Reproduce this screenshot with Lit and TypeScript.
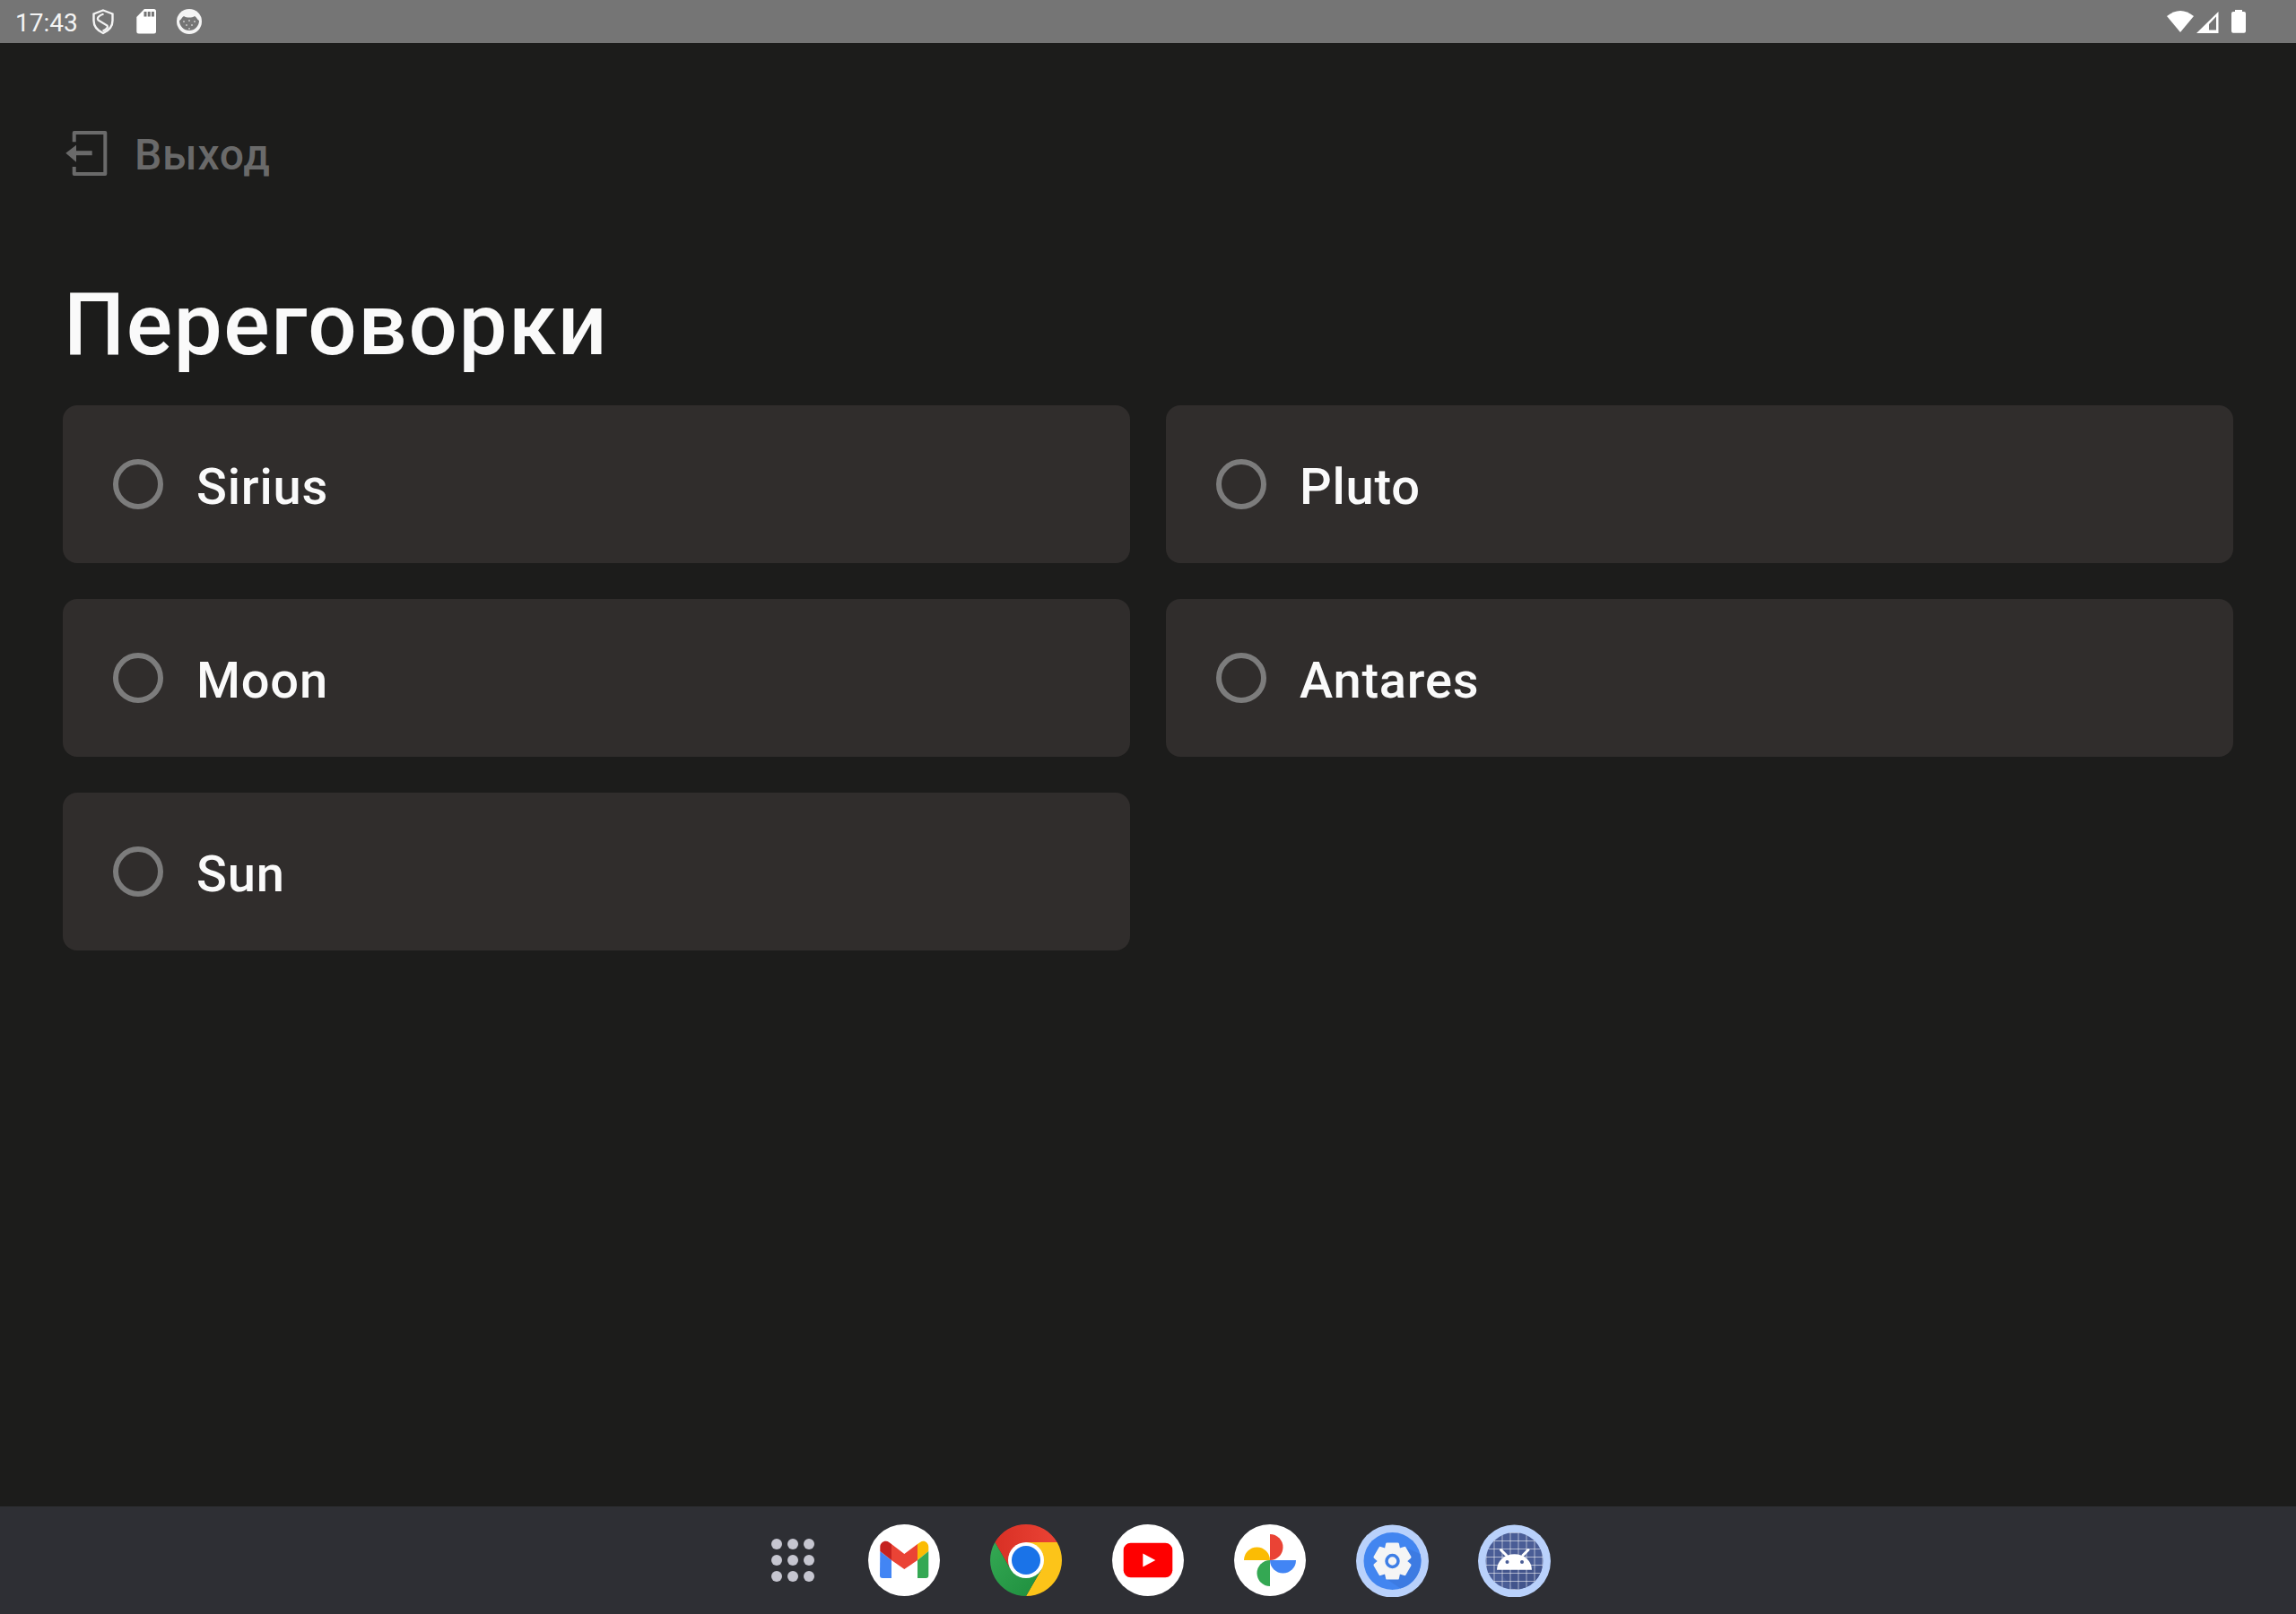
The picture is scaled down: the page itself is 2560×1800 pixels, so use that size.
import {html, css, svg, LitElement} from 'lit';
import {customElement} from 'lit/decorators.js';

const rooms = ['Sirius', 'Pluto', 'Moon', 'Antares', 'Sun'];

// six toothed gear outline around 0,0
function gearPath(outer: number, inner: number) {
  const pts: string[] = [];
  for (let i = 0; i < 6; i++) {
    const a = (i * 60 - 90) * Math.PI / 180;
    for (const [off, r] of [[-0.3, outer], [0.3, outer], [0.5, inner], [0.55, inner]] as number[][]) {
      const t = a + off;
      pts.push(`${(Math.cos(t) * r).toFixed(2)} ${(Math.sin(t) * r).toFixed(2)}`);
    }
  }
  return 'M' + pts.join('L') + 'Z';
}

const gridLines = [-31.5, -22.5, -13.5, -4.5, 4.5, 13.5, 22.5, 31.5];

@customElement('app-root')
export class AppRoot extends LitElement {
  static styles = css`
    :host {
      display: flex;
      flex-direction: column;
      height: 1800px;
      background: #1c1c1b;
      font-family: Roboto, sans-serif;
      color: #fff;
    }
    svg { display: block; }
    .status {
      height: 48px;
      background: #757575;
      display: flex;
      align-items: center;
      padding: 0 56px 0 17px;
      font-size: 28px;
      color: #f4f4f4;
    }
    .status .time { margin-right: 17px; width: 69px; position: relative; top: 1px; }
    .status .right { margin-left: auto; }
    main { flex: 1; display: flex; flex-direction: column; padding: 0 70px; }
    .exit {
      display: flex;
      align-items: center;
      gap: 30px;
      margin-top: 89px;
      padding-left: 3px;
      color: #6a6a6a;
      font-size: 48px;
      font-weight: 500;
      letter-spacing: 0.8px;
      line-height: 68px;
    }
    .exit span { position: relative; top: 2px; }
    h1 {
      margin: 101px 0 0 1px;
      font-size: 96px;
      font-weight: 500;
      letter-spacing: 1.6px;
      line-height: 112px;
      height: 146px;
      color: #fafafa;
    }
    .rooms { display: grid; grid-template-columns: 1fr 1fr; gap: 40px; }
    .room {
      height: 176px;
      border-radius: 16px;
      background: #302d2c;
      display: flex;
      align-items: center;
      padding-left: 56px;
      font-size: 56px;
      font-weight: 500;
      letter-spacing: 0.8px;
      color: #fafafa;
    }
    .radio {
      width: 56px;
      height: 56px;
      box-sizing: border-box;
      border: 6px solid #7c7c7c;
      border-radius: 50%;
      margin: 0 37px 0 0;
    }
    .room span { position: relative; top: 3px; }
    .dock {
      height: 120px;
      background: #2e2f34;
      display: flex;
      align-items: center;
      justify-content: center;
      padding-left: 24px;
    }
    .cell { width: 136px; display: flex; justify-content: center; }
    .cell.launcher { width: 112px; }
    .disc { width: 80px; height: 80px; border-radius: 50%; background: #fff; }
  `;

  renderStatus() {
    return html`<div class="status">
      <div class="time">17:43</div>
      <svg width="122" height="48" viewBox="103 0 122 48">
        <g fill="none" stroke="#f4f4f4" stroke-width="2.400">
          <path d="M115 11.500 125.500 15.500V23c0 6.500-4 11-10.500 14C108.500 34 104.500 29.500 104.500 23V15.500Z"/>
          <path d="M115.500 15.500C111 17 107.500 19.500 109.500 22.500L119.500 28.500C121 31 118 33 114.500 34.500" stroke-width="2.200"/>
        </g>
        <path fill="#fff" d="M161 10H171.500a2.500 2.500 0 0 1 2.500 2.500V35a2.500 2.500 0 0 1-2.500 2.500H154.800a2.500 2.500 0 0 1-2.500-2.500V19Z"/>
        <path fill="#757575" d="M160.500 13h3v5.500h-3ZM164.700 13h3v5.500h-3ZM168.900 13h3v5.500h-3Z"/>
        <circle cx="211" cy="24" r="14" fill="#f4f4f4"/>
        <path fill="#757575" d="M200 23c2-1 3-4 5-5 3 2 9 2 12 0 2 1 3 4 5 5a11 11 0 0 1-22 0Z"/>
        <g fill="#fff" opacity=".6">
          <circle cx="205" cy="24" r="1"/><circle cx="211" cy="23" r="1"/><circle cx="217" cy="24" r="1"/>
          <circle cx="208" cy="28" r="1"/><circle cx="214" cy="28" r="1"/><circle cx="211" cy="32" r="1"/>
        </g>
      </svg>
      <svg class="right" width="88" height="48" viewBox="2416 0 88 48" fill="#fff">
        <path d="M2416 18Q2431 6 2446 18L2431 36Z"/>
        <path fill-rule="evenodd" d="M2449 37 2473.500 13V37ZM2463 33.500H2471V18.500L2463 27Z"/>
        <path d="M2490 13H2492V11H2500V13H2502a2 2 0 0 1 2 2V34.700a2 2 0 0 1-2 2H2490a2 2 0 0 1-2-2V15a2 2 0 0 1 2-2Z"/>
      </svg>
    </div>`;
  }

  renderExit() {
    return html`<div class="exit">
      <svg width="47" height="50" viewBox="73 146 47 50" fill="none" stroke="#6a6a6a" stroke-width="4">
        <path stroke-linejoin="round" d="M82.700 158.300V148H117.300V194H82.700V186"/>
        <path d="M83 170.700H102.700" stroke-width="5"/>
        <path fill="#6a6a6a" stroke="none" d="M73.300 170.700 85 161.700V180.700Z"/>
      </svg>
      <span>Выход</span>
    </div>`;
  }

  gmail() {
    return html`<svg class="disc" viewBox="0 0 80 80">
      <path fill="#4285f4" d="M13.300 30 26 40V60H16a3 3 0 0 1-3-3Z"/>
      <path fill="#c5221f" d="M13.300 30V25c0-5 6-8 10-5L26 22V40Z"/>
      <path fill="#ea4335" d="M26 22 40.300 33 55 22V40L40.300 50 26 40Z"/>
      <path fill="#fbbc04" d="M55 22 58 20c4-3 9 0 9.300 5v5L55 40Z"/>
      <path fill="#34a853" d="M67.300 30V57a3 3 0 0 1-3 3H55V40Z"/>
    </svg>`;
  }

  chrome() {
    return html`<svg width="80" height="80" viewBox="-40 -40 80 80">
      <defs>
        <linearGradient id="cr" x1="0" x2="1"><stop offset="0" stop-color="#d93025"/><stop offset="1" stop-color="#ea4335"/></linearGradient>
        <linearGradient id="cg" x1="1" y1="1" x2="0" y2="0"><stop offset="0" stop-color="#1e8e3e"/><stop offset="1" stop-color="#34a853"/></linearGradient>
      </defs>
      <path fill="url(#cr)" d="M-34.640-20A40 40 0 0 1 34.640-20H0L-17.320 10Z"/>
      <path fill="#fcc419" d="M34.640-20A40 40 0 0 1 0 40L17.320 10 0-20Z"/>
      <path fill="url(#cg)" d="M0 40A40 40 0 0 1-34.640-20L-17.320 10H17.320Z"/>
      <circle r="20" fill="#fff"/>
      <circle r="16" fill="#1a73e8"/>
    </svg>`;
  }

  youtube() {
    return html`<svg class="disc" viewBox="-40 -40 80 80">
      <rect x="-27.300" y="-19.300" width="54.600" height="38.600" rx="8" fill="#ff0000"/>
      <path fill="#fff" d="M-5.700-7.500 8.300 0-5.700 7.500Z"/>
    </svg>`;
  }

  photos() {
    return html`<svg class="disc" viewBox="-40 -40 80 80">
      <path fill="#ea4335" d="M0 0V-29A14.500 14.500 0 0 1 0 0Z"/>
      <path fill="#fbbc04" d="M0 0H-29A14.500 14.500 0 0 1 0 0Z"/>
      <path fill="#4285f4" d="M0 0H29A14.500 14.500 0 0 1 0 0Z"/>
      <path fill="#34a853" d="M0 0V29A14.500 14.500 0 0 1 0 0Z"/>
    </svg>`;
  }

  settings() {
    return html`<svg width="81" height="81" viewBox="-40.500 -41 81 81">
      <circle r="40.500" fill="#b9d1fb"/>
      <circle r="32" fill="#4285f0"/>
      <path fill="#3d7be2" d="M15 -15 31 -8A32 32 0 0 1 9 30.500L-14 15Z"/>
      <path fill="#f5f5f5" stroke="#f5f5f5" stroke-width="3" stroke-linejoin="round" d="${gearPath(20, 15)}"/>
      <circle r="6.500" fill="#f5f5f5" stroke="#3f7fe6" stroke-width="3.500"/>
    </svg>`;
  }

  android() {
    return html`<svg width="81" height="81" viewBox="-40.500 -41 81 81">
      <defs><clipPath id="ac"><circle r="32"/></clipPath></defs>
      <circle r="40.500" fill="#b9d1fb"/>
      <circle r="32" fill="#4a5d96"/>
      <g clip-path="url(#ac)">
        <path fill="#43558c" d="M-19 9 0 32H32V4L19 9Z"/>
        <g stroke="#fff" stroke-opacity=".55" stroke-width="1">
          ${gridLines.map(n => svg`<path d="${`M${n} -32V32M-32 ${n}H32`}"></path>`)}
        </g>
      </g>
      <path stroke="#fff" stroke-width="3" stroke-linecap="round" d="M-15-12.500-9-6.500M15.500-12.500 9.500-6.500"/>
      <path fill="#fff" d="M-19.500 9.700A19.500 17.500 0 0 1 19.500 9.700Z"/>
      <circle cx="-8" cy="1" r="2" fill="#4a5d96"/>
      <circle cx="8.500" cy="1" r="2" fill="#4a5d96"/>
    </svg>`;
  }

  renderDock() {
    const dots = [-18, 0, 18];
    return html`<div class="dock">
      <div class="cell launcher">
        <svg width="48" height="48" viewBox="-24 -24 48 48" fill="#c6c6d0">
          ${dots.map(y => dots.map(x => svg`<circle cx="${x}" cy="${y}" r="6"></circle>`))}
        </svg>
      </div>
      <div class="cell">${this.gmail()}</div>
      <div class="cell">${this.chrome()}</div>
      <div class="cell">${this.youtube()}</div>
      <div class="cell">${this.photos()}</div>
      <div class="cell">${this.settings()}</div>
      <div class="cell">${this.android()}</div>
    </div>`;
  }

  render() {
    return html`
      ${this.renderStatus()}
      <main>
        ${this.renderExit()}
        <h1>Переговорки</h1>
        <div class="rooms">
          ${rooms.map(name => html`<div class="room"><div class="radio"></div><span>${name}</span></div>`)}
        </div>
      </main>
      ${this.renderDock()}
    `;
  }
}
